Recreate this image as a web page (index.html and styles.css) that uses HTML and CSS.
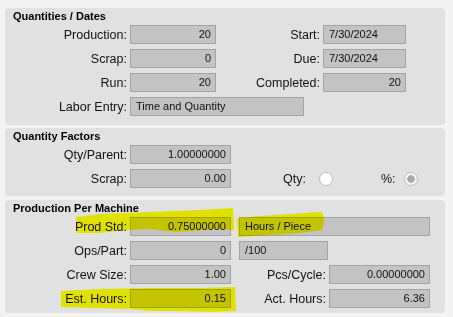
FILE: index.html
```html
<!DOCTYPE html>
<html lang="en">
<head>
  <meta charset="UTF-8" />
  <meta name="viewport" content="width=device-width, initial-scale=1.0"/>
  <title>Operation Quantities</title>
  <link rel="stylesheet" href="styles.css">
</head>
<body>

  <div class="form">
    <section class="group">
      <h2 class="group-title">Quantities / Dates</h2>
      <div class="grid grid-dates">
        <span class="lbl">Production:</span>
        <div class="fld num">20</div>
        <span class="lbl">Start:</span>
        <div class="fld">7/30/2024</div>

        <span class="lbl">Scrap:</span>
        <div class="fld num">0</div>
        <span class="lbl">Due:</span>
        <div class="fld">7/30/2024</div>

        <span class="lbl">Run:</span>
        <div class="fld num">20</div>
        <span class="lbl">Completed:</span>
        <div class="fld num">20</div>

        <span class="lbl">Labor Entry:</span>
        <div class="fld labor">Time and Quantity</div>
      </div>
    </section>

    <section class="group group-factors">
      <h2 class="group-title">Quantity Factors</h2>
      <div class="grid grid-factors">
        <span class="lbl">Qty/Parent:</span>
        <div class="fld num">1.00000000</div>
        <span></span>

        <span class="lbl">Scrap:</span>
        <div class="fld num">0.00</div>
        <div class="opts">
          <span class="lbl opt-qty">Qty:</span>
          <span class="radio"></span>
          <span class="lbl opt-pct">%:</span>
          <span class="radio checked"></span>
        </div>
      </div>
    </section>

    <section class="group group-machine">
      <h2 class="group-title">Production Per Machine</h2>
      <div class="grid grid-machine">
        <span class="lbl">Prod Std:</span>
        <div class="fld num">0.75000000</div>
        <div class="fld unit">Hours / Piece</div>

        <span class="lbl">Ops/Part:</span>
        <div class="fld num">0</div>
        <div class="fld per">/100</div>

        <span class="lbl">Crew Size:</span>
        <div class="fld num">1.00</div>
        <span class="lbl">Pcs/Cycle:</span>
        <div class="fld num">0.00000000</div>

        <span class="lbl">Est. Hours:</span>
        <div class="fld num">0.15</div>
        <span class="lbl">Act. Hours:</span>
        <div class="fld num">6.36</div>
      </div>
    </section>
  </div>

  <!-- highlighter marks drawn over the form -->
  <svg class="marker" width="453" height="317" viewBox="0 0 453 317">
    <path d="M76 217 L100 214 L150 212 L200 210 L233 208 L234 230 L215 229 L190 231 L175 232 L150 229 L125 230 L100 233 L77 233 Z"/>
    <path d="M237 218 L260 216 L290 214 L322 212 Q326 220 322 230 L300 233 L270 235 L238 237 Z"/>
    <path d="M61 291 L100 289 L150 288 L200 288 L235 287 L236 311 L210 312 L180 311 L150 311 L130 309 L100 308 L61 307 Z"/>
  </svg>

</body>
</html>
```

FILE: styles.css
```css
* {
  box-sizing: border-box;
}

body {
  margin: 0;
  position: relative;
  background: #f3f3f3;
  color: #111;
  font-family: 'Liberation Sans', Arial, sans-serif;
}

.form {
  display: flex;
  flex-direction: column;
  gap: 3px;
  padding: 8px 0 0 5px;
  width: 445px;
}

.group {
  background: #e1e1e1;
  border-radius: 4px;
  padding: 1px 0 9px;
}

.group-factors {
  padding-bottom: 8px;
}

.group-machine {
  margin-top: 1px;
  padding-bottom: 5px;
}

.group-title {
  margin: 0 0 2px;
  padding-left: 8px;
  font-size: 11px;
  font-weight: bold;
  line-height: 14px;
  color: #000;
}

.grid {
  display: grid;
  grid-auto-rows: 19px;
  column-gap: 3px;
  row-gap: 5px;
  align-items: center;
}

.grid-dates {
  grid-template-columns: 122px 86px 101px 83px;
}

.grid-factors {
  grid-template-columns: 122px 101px 1fr;
}

.grid-machine {
  grid-template-columns: 122px 101px 92px 101px;
}

.lbl {
  font-size: 12.5px;
  text-align: right;
  white-space: nowrap;
}

.fld {
  height: 19px;
  background: #c3c3c3;
  border: 1px solid #a3a3a3;
  font-size: 11px;
  line-height: 17px;
  padding: 0 4px 0 5px;
  white-space: nowrap;
  overflow: hidden;
}

.num {
  text-align: right;
}

.labor {
  grid-column: 2 / span 2;
  width: 174px;
}

.unit,
.per {
  grid-column: 3 / span 2;
  margin-left: 5px;
}

.per {
  justify-self: start;
  width: 89px;
}

.opts {
  display: flex;
  align-items: center;
}

.opt-qty {
  margin-left: 49px;
}

.opt-pct {
  margin-left: 48px;
}

.radio {
  width: 14px;
  height: 14px;
  margin-left: 13px;
  border: 1px solid #bcbcbc;
  border-radius: 50%;
  background: #fff;
}

.opt-pct + .radio {
  margin-left: 8px;
}

.radio.checked {
  background: radial-gradient(circle, #a9a9a9 0 3.5px, #f6f6f6 4px);
}

.marker {
  position: absolute;
  top: 0;
  left: 0;
  pointer-events: none;
  mix-blend-mode: multiply;
  fill: #ffff00;
}
```
